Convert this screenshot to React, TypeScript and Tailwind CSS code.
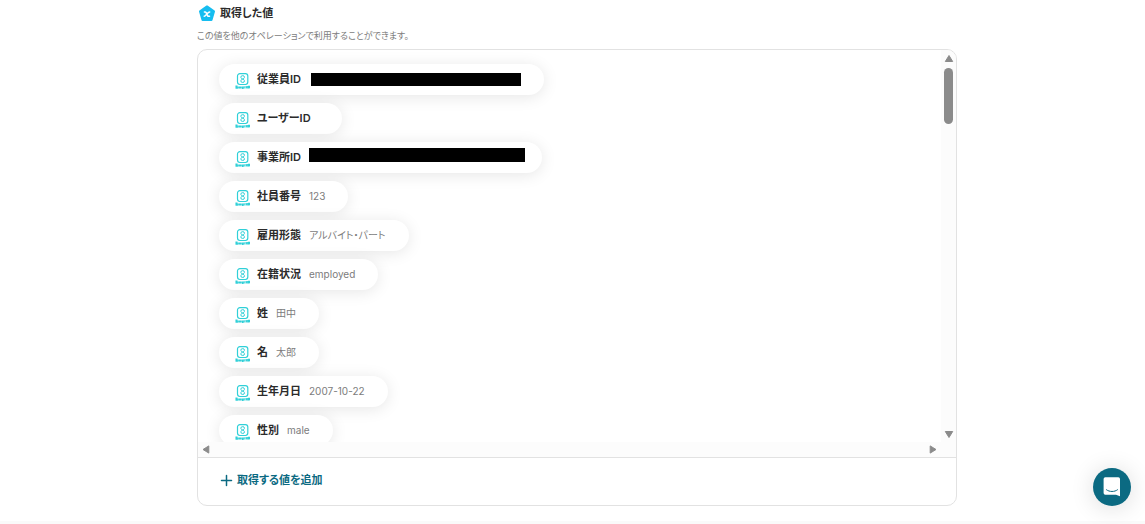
import React from "react";

type Value = {
  label: string;
  sample?: string;
  mask?: string;
};

const values: Value[] = [
  { label: "従業員ID", mask: "mt-0.5 ml-2.5 h-[13px] w-[210px]" },
  { label: "ユーザーID", sample: "" },
  { label: "事業所ID", mask: "ml-2 -mt-1 mr-[-6px] h-[14px] w-[216px]" },
  { label: "社員番号", sample: "123" },
  { label: "雇用形態", sample: "アルバイト・パート" },
  { label: "在籍状況", sample: "employed" },
  { label: "姓", sample: "田中" },
  { label: "名", sample: "太郎" },
  { label: "生年月日", sample: "2007-10-22" },
  { label: "性別", sample: "male" },
];

function VariableIcon() {
  return (
    <svg width="18" height="18" viewBox="0 0 18 18" aria-hidden="true">
      <path
        d="M9 2.400 16 7.400 13.500 15.900H4.500L2 7.400Z"
        fill="#16bdf0"
        stroke="#16bdf0"
        strokeWidth="2"
        strokeLinejoin="round"
      />
      <path
        d="M6.400 7.900h.7c.6 0 .8.300 1 .7l1.500 3c.2.500.5.700 1 .700h.9M11.700 7.900c-1.300 0-2.200 1.300-3 2.200s-1.300 2.100-2.500 2.200"
        fill="none"
        stroke="#fff"
        strokeWidth="1.500"
        strokeLinecap="round"
      />
    </svg>
  );
}

function SmartHrIcon() {
  return (
    <svg width="15" height="16" viewBox="0 0 15 16" aria-hidden="true">
      <g fill="none" stroke="#30d0d8">
        <rect
          x="2.500"
          y="0.700"
          width="10.300"
          height="10.800"
          rx="2.400"
          strokeWidth="1.200"
        />
        <path d="M9.400 4.500V4.100a1.400 1.400 0 0 0-1.400-1.400h-.7a1.400 1.400 0 0 0-1.400 1.400v.4c0 1.500 3.500 1.600 3.500 3.100v.4A1.400 1.400 0 0 1 8 9.400h-.7A1.400 1.400 0 0 1 5.900 8v-.4c0-1.500 3.500-1.600 3.500-3.100" />
        <path
          d="M2.500 13.100H1v1H2.400v1.100H.5M3.700 15.400V14h2v1.400M4.700 14v1.400M7 15.400v-1.300h1v1.300H7M9.200 13.200v2.200M11 12.900v2.500M11 14.200h1.300M12.300 12.900v2.500M13.500 15.400v-2.200h1v1.200L14.700 15.400"
          strokeWidth="1.100"
        />
      </g>
    </svg>
  );
}

function ValueChip({ label, sample, mask }: Value) {
  return (
    <li className="flex h-[31px] w-fit shrink-0 items-center rounded-full bg-white pr-[23px] pb-0.5 pl-4 whitespace-nowrap shadow-[0_2px_16px_rgba(0,0,0,0.1)]">
      <span className="mt-1 shrink-0">
        <SmartHrIcon />
      </span>
      <span className="ml-[7px] text-[11px] leading-4 font-semibold text-[#2b2b2b]">
        {label}
      </span>
      {mask ? (
        <span className={`${mask} bg-black`} />
      ) : (
        <span className="ml-2 text-[10px] leading-4 text-[#7c7c7c]">
          {sample}
        </span>
      )}
    </li>
  );
}

function Arrow({ d }: { d: string }) {
  return (
    <svg width="10" height="10" viewBox="0 0 10 10" aria-hidden="true">
      <path
        d={d}
        fill="#8b8b8b"
        stroke="#8b8b8b"
        strokeWidth="1"
        strokeLinejoin="round"
      />
    </svg>
  );
}

export default function App() {
  return (
    <div className="bg-white pl-[9px] font-['Inter','Noto_Sans_CJK_JP',sans-serif] [font-feature-settings:'palt']">
      <main className="mx-auto max-w-[760px] pt-1 pb-[15px]">
        <h2 className="flex items-center gap-1 pl-px text-[11px] leading-[18px] font-semibold text-[#2b2b2b]">
          <VariableIcon />
          取得した値
        </h2>
        <p className="mt-1.5 text-[9px] leading-4 text-[#7c7c7c]">
          この値を他のオペレーションで利用することができます。
        </p>

        <section className="mt-[5px] overflow-hidden rounded-[10px] border border-[#e2e2e2]">
          <div className="grid grid-cols-[1fr_15px] grid-rows-[392px_15px]">
            <ul className="flex flex-col gap-2 overflow-hidden pt-3.5 pl-[21px]">
              {values.map((value) => (
                <ValueChip key={value.label} {...value} />
              ))}
            </ul>
            <div className="flex flex-col items-center bg-[#fcfcfc] py-[3px]">
              <Arrow d="M5 2.500 8.700 8.500H1.300Z" />
              <div className="mt-[5px] h-14 w-[9px] rounded-full bg-[#8b8b8b]" />
              <div className="mt-auto">
                <Arrow d="M5 8.500 8.700 2.500H1.300Z" />
              </div>
            </div>
            <div className="flex items-center justify-between bg-[#fcfcfc] px-[3px]">
              <Arrow d="M2 4.500 7.800 .9V8.100Z" />
              <Arrow d="M8 4.500 2.200 .9V8.100Z" />
            </div>
            <div className="bg-[#fcfcfc]" />
          </div>
          <div className="border-t border-[#e2e2e2] px-[22px] pt-[13px] pb-4">
            <button
              type="button"
              className="flex items-center gap-1 text-[11px] leading-[18px] font-semibold text-[#0b6a82]"
            >
              <svg
                width="13"
                height="13"
                viewBox="0 0 13 13"
                stroke="currentColor"
                strokeWidth="1.500"
                strokeLinecap="round"
                aria-hidden="true"
              >
                <path d="M6.500 1.500v10M1.500 6.500h10" />
              </svg>
              取得する値を追加
            </button>
          </div>
        </section>
      </main>
      <div className="-ml-[9px] h-[3px] bg-[#fafafa]" />

      <button
        type="button"
        aria-label="チャットを開く"
        className="fixed right-3.5 bottom-[18px] flex size-[38px] items-center justify-center rounded-full bg-[#0b6a82] shadow-[0_2px_24px_rgba(0,0,0,0.14)]"
      >
        <svg width="18" height="20" viewBox="0 0 18 20" aria-hidden="true">
          <path
            d="M2.300 .200h13a1.700 1.700 0 0 1 1.700 1.700V19.200l-4-1.400H2.300A1.700 1.700 0 0 1 .6 16.100V1.900A1.700 1.700 0 0 1 2.300 .200Z"
            fill="#fff"
          />
          <path
            d="M3.500 12.800c3 2.300 8 2.300 11 0"
            fill="none"
            stroke="#0b6a82"
            strokeLinecap="round"
          />
        </svg>
      </button>
    </div>
  );
}
